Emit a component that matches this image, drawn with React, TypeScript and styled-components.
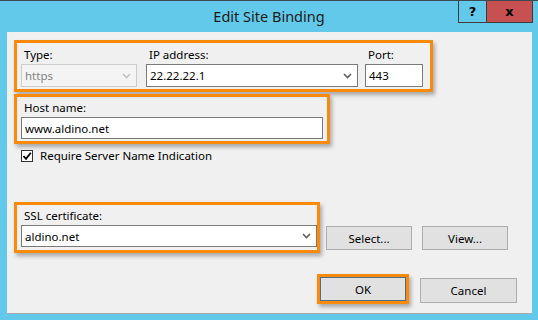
import React from "react";
import styled, { createGlobalStyle } from "styled-components";

const Global = createGlobalStyle`
  html, body { margin: 0; padding: 0; }
  body { font-family: "Noto Sans", "Open Sans", sans-serif; font-size: 11.5px; color: #000; }
`;

const Window = styled.div`
  width: 538px;
  height: 320px;
  box-sizing: border-box;
  background: #63c9ea;
  border-top: 1px solid #3c4a52;
  display: flex;
  flex-direction: column;
`;

const TitleBar = styled.div`
  height: 31px;
  display: grid;
  grid-template-columns: 1fr auto 1fr;
  align-items: start;
`;

const Title = styled.div`
  grid-column: 2;
  font-size: 14.5px;
  line-height: 30px;
  color: #1b1b1b;
`;

const CaptionButtons = styled.div`
  grid-column: 3;
  justify-self: end;
  margin-right: 5px;
  display: flex;
  border: 1px solid #3b3b3b;
  border-top: none;
  height: 21px;
`;

const CaptionButton = styled.div<{ $w: number; $bg: string }>`
  width: ${(p) => p.$w}px;
  height: 21px;
  background: ${(p) => p.$bg};
  display: flex;
  align-items: center;
  justify-content: center;
  font-family: "DejaVu Sans", sans-serif;
  font-weight: bold;
  font-size: 13px;
  color: #000;
  & + & { border-left: 1px solid #3b3b3b; }
`;

const Client = styled.div`
  flex: 1;
  margin: 0 6px 6px 7px;
  background: #f0f0f0;
  border-bottom: 1px solid #a8a8a8;
  padding: 8px 15px 0 7px;
  display: flex;
  flex-direction: column;
  box-sizing: border-box;
`;

const Highlight = styled.div<{ $w: number; $pad: string; $mt?: number }>`
  width: ${(p) => p.$w}px;
  margin-top: ${(p) => p.$mt ?? 0}px;
  box-sizing: border-box;
  border: 3px solid #f98a0c;
  box-shadow: 2px 3px 4px rgba(0, 0, 0, 0.3);
  padding: ${(p) => p.$pad};
`;

const FieldRow = styled.div`
  display: flex;
`;

const Field = styled.div<{ $w: number; $ml?: number }>`
  width: ${(p) => p.$w}px;
  margin-left: ${(p) => p.$ml ?? 0}px;
  display: flex;
  flex-direction: column;
`;

const Label = styled.div`
  line-height: 16px;
  height: 16px;
  margin-bottom: 1px;
  padding-left: 3px;
  white-space: nowrap;
`;

const Box = styled.div<{ $h: number; $disabled?: boolean }>`
  height: ${(p) => p.$h}px;
  box-sizing: border-box;
  border: 1px solid ${(p) => (p.$disabled ? "#cccccc" : "#7a7a7a")};
  background: ${(p) => (p.$disabled ? "#f4f4f4" : "#ffffff")};
  color: ${(p) => (p.$disabled ? "#838383" : "#000")};
  display: flex;
  align-items: center;
  padding: 0 5px 0 3px;
  white-space: nowrap;
`;

const BoxText = styled.span`
  flex: 1;
`;

const Chevron = ({ color }: { color: string }) => (
  <svg width="9" height="6" viewBox="0 0 9 6">
    <path d="M1 1 L4.5 4.5 L8 1" fill="none" stroke={color} strokeWidth="1.6" />
  </svg>
);

const CheckRow = styled.label`
  display: flex;
  align-items: center;
  margin-top: 6px;
  margin-left: 7px;
  height: 12px;
`;

const CheckBox = styled.span`
  width: 12px;
  height: 12px;
  box-sizing: border-box;
  border: 1px solid #333;
  background: #fff;
  display: flex;
  align-items: center;
  justify-content: center;
`;

const CheckLabel = styled.span`
  margin-left: 7px;
  line-height: 16px;
`;

const SslRow = styled.div`
  display: flex;
  align-items: flex-start;
  margin-top: 40px;
`;

const Button = styled.div<{ $ml?: number; $mt?: number; $default?: boolean }>`
  width: 86px;
  height: 24px;
  box-sizing: border-box;
  margin-left: ${(p) => p.$ml ?? 0}px;
  margin-top: ${(p) => p.$mt ?? 0}px;
  background: #e1e1e1;
  border: 1px solid ${(p) => (p.$default ? "#4b6e8c" : "#adadad")};
  display: flex;
  align-items: center;
  justify-content: center;
`;

const BottomRow = styled.div`
  display: flex;
  justify-content: flex-end;
  align-items: flex-start;
  margin-top: 21px;
`;

const OkFrame = styled.div`
  border: 3px solid #f98a0c;
  box-shadow: 2px 3px 4px rgba(0, 0, 0, 0.3);
`;

const CancelButton = styled(Button)`
  width: 97px;
  height: 25px;
  margin-top: 4px;
`;

export default function App() {
  return (
    <>
      <Global />
      <Window>
        <TitleBar>
          <Title>Edit Site Binding</Title>
          <CaptionButtons>
            <CaptionButton $w={27} $bg="#63c9ea">?</CaptionButton>
            <CaptionButton $w={45} $bg="#c75050">x</CaptionButton>
          </CaptionButtons>
        </TitleBar>
        <Client>
          <Highlight $w={419} $pad="4px 7px 2px 4px">
            <FieldRow>
              <Field $w={116}>
                <Label>Type:</Label>
                <Box $h={23} $disabled>
                  <BoxText>https</BoxText>
                  <Chevron color="#c4c4c4" />
                </Box>
              </Field>
              <Field $w={212} $ml={9}>
                <Label>IP address:</Label>
                <Box $h={23}>
                  <BoxText>22.22.22.1</BoxText>
                  <Chevron color="#606060" />
                </Box>
              </Field>
              <Field $w={58} $ml={7}>
                <Label>Port:</Label>
                <Box $h={23}>
                  <BoxText>443</BoxText>
                </Box>
              </Field>
            </FieldRow>
          </Highlight>
          <Highlight $w={316} $pad="3px 4px 2px 4px" $mt={2}>
            <Field $w={302}>
              <Label>Host name:</Label>
              <Box $h={22}>
                <BoxText>www.aldino.net</BoxText>
              </Box>
            </Field>
          </Highlight>
          <CheckRow>
            <CheckBox>
              <svg width="10" height="10" viewBox="0 0 10 10">
                <path d="M1.5 5 L4 7.8 L8.8 1.8" fill="none" stroke="#000" strokeWidth="1.8" />
              </svg>
            </CheckBox>
            <CheckLabel>Require Server Name Indication</CheckLabel>
          </CheckRow>
          <SslRow>
            <Highlight $w={306} $pad="3px 0 3px 4px">
              <Field $w={296}>
                <Label>SSL certificate:</Label>
                <Box $h={22}>
                  <BoxText>aldino.net</BoxText>
                  <Chevron color="#606060" />
                </Box>
              </Field>
            </Highlight>
            <Button $ml={6} $mt={24}>Select...</Button>
            <Button $ml={10} $mt={24}>View...</Button>
          </SslRow>
          <BottomRow>
            <OkFrame>
              <Button $default>OK</Button>
            </OkFrame>
            <CancelButton $ml={11}>Cancel</CancelButton>
          </BottomRow>
        </Client>
      </Window>
    </>
  );
}
